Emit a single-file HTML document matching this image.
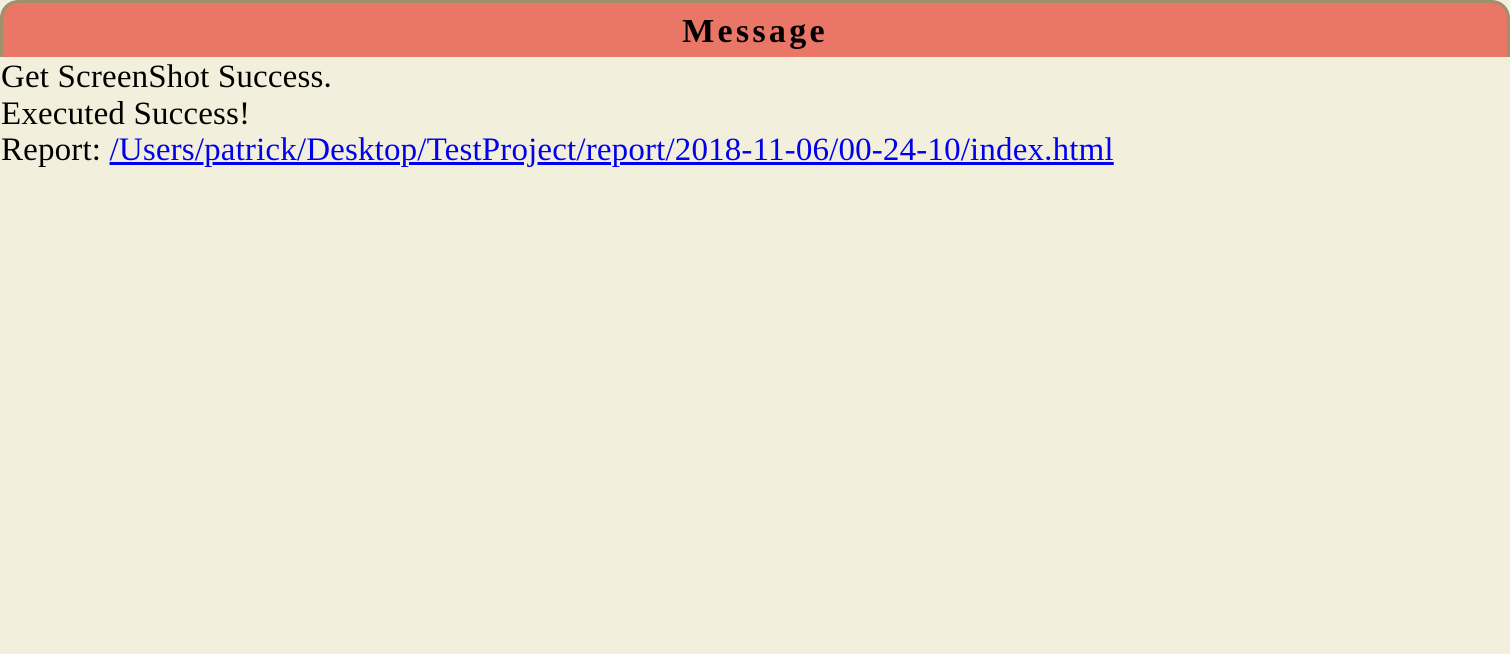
<!DOCTYPE html>
<html><head><style>
html,body{margin:0;padding:0;width:1510px;height:654px;overflow:hidden;background:#f2f0dc;font-family:"Liberation Serif",serif;}
.hdr{position:absolute;left:0;top:0;width:1504px;height:54px;background:#e97667;border:3px solid #9e9068;border-bottom:none;border-radius:18px 18px 0 0;text-align:center;}
.hdr span{font-weight:bold;font-size:34px;letter-spacing:3.3px;line-height:58px;color:#000;}
.body{position:absolute;left:1px;top:59px;font-size:33px;letter-spacing:0.16px;line-height:36.5px;color:#000;}
a{color:#0000ee;text-decoration:underline;}
</style></head><body>
<div class="hdr"><span>Message</span></div>
<div class="body">Get ScreenShot Success.<br>Executed Success!<br>Report: <a>/Users/patrick/Desktop/TestProject/report/2018-11-06/00-24-10/index.html</a></div>
</body></html>
